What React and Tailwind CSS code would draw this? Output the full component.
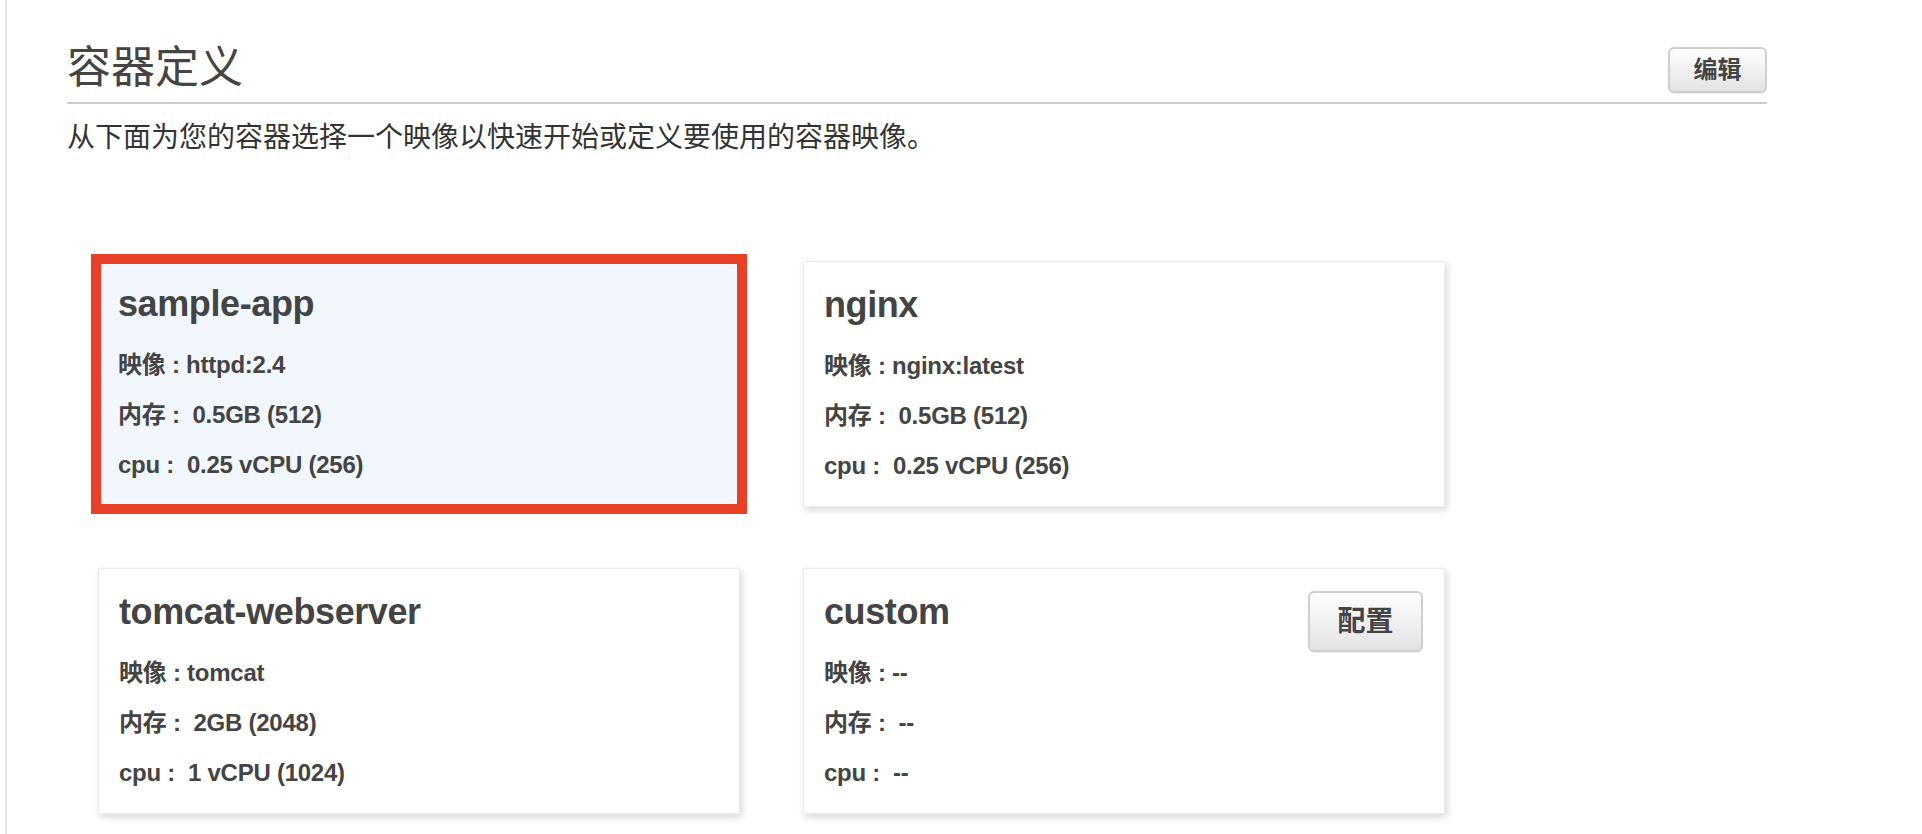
import React from "react";

const cards = [
  {
    name: "sample-app",
    image: "httpd:2.4",
    memory: "0.5GB (512)",
    cpu: "0.25 vCPU (256)",
    selected: true,
  },
  {
    name: "nginx",
    image: "nginx:latest",
    memory: "0.5GB (512)",
    cpu: "0.25 vCPU (256)",
  },
  {
    name: "tomcat-webserver",
    image: "tomcat",
    memory: "2GB (2048)",
    cpu: "1 vCPU (1024)",
  },
  {
    name: "custom",
    image: "--",
    memory: "--",
    cpu: "--",
    configurable: true,
  },
];

const GrayButton = (props) => {
  return (
    <button
      className={`${props.className} rounded-[6px] border-2 border-[#cfcfcf] bg-linear-to-b from-[#fefefe] to-[#e3e3e3] font-bold text-[#444] shadow-[0_1px_1px_rgba(0,0,0,0.08)]`}
    >
      {props.children}
    </button>
  );
};

const Row = (props) => {
  return (
    <div className="h-[50px] leading-[50px] text-[24px] font-bold text-[#444] tracking-[-0.25px] whitespace-pre">
      {props.label}
      {" :"}
      {props.wide ? " \u00a0" : " "}
      {props.value}
    </div>
  );
};

const Card = (props) => {
  const card = props.card;
  return (
    <div
      className={
        card.selected
          ? "h-[246px] pl-[20px] pr-[21px] pt-[21px] bg-[#f1f7fc] outline-[10px] outline-solid outline-[#e9402a] -outline-offset-3"
          : "h-[246px] pl-[20px] pr-[21px] pt-[21px] bg-white border border-[#ececec] shadow-[2px_3px_7px_rgba(0,0,0,0.16)]"
      }
    >
      <div className="flex flex-row justify-between items-start">
        <div className="text-[36px] leading-[43px] font-bold text-[#444] tracking-[-0.4px]">
          {card.name}
        </div>
        {card.configurable ? (
          <GrayButton className="w-[115px] h-[61px] mt-[1px] text-[28px]">
            配置
          </GrayButton>
        ) : null}
      </div>
      <div className={card.configurable ? "-mt-[4px]" : "mt-[15px]"}>
        <Row label="映像" value={card.image} />
        <Row label="内存" value={card.memory} wide />
        <Row label="cpu" value={card.cpu} wide />
      </div>
    </div>
  );
};

export default function App() {
  return (
    <div
      className="h-[834px] overflow-hidden bg-white"
      style={{
        fontFamily:
          '"Liberation Sans", "Noto Sans CJK SC", "Noto Sans", sans-serif',
      }}
    >
      <div className="ml-[5px] h-full border-l-2 border-[#e6e6e6] pl-[60px] pt-[38px]">
        <div className="w-[1700px]">
          <div className="flex flex-row justify-between items-start pb-[9px] border-b-2 border-[#cccccc]">
            <h1
              className="text-[44px] leading-[53px] font-normal text-[#444]"
              style={{ fontFamily: '"Noto Sans CJK SC", sans-serif' }}
            >
              容器定义
            </h1>
            <GrayButton className="w-[99px] h-[46px] mt-[9px] text-[24px]">
              编辑
            </GrayButton>
          </div>
          <p
            className="mt-[11px] text-[28px] leading-[40px] text-[#333]"
            style={{ fontFamily: '"Noto Sans CJK SC", sans-serif' }}
          >
            从下面为您的容器选择一个映像以快速开始或定义要使用的容器映像。
          </p>
          <div className="ml-[31px] mt-[106px] grid grid-cols-[642px_642px] gap-x-[63px] gap-y-[61px]">
            {cards.map((card) => (
              <Card key={card.name} card={card} />
            ))}
          </div>
        </div>
      </div>
    </div>
  );
}
